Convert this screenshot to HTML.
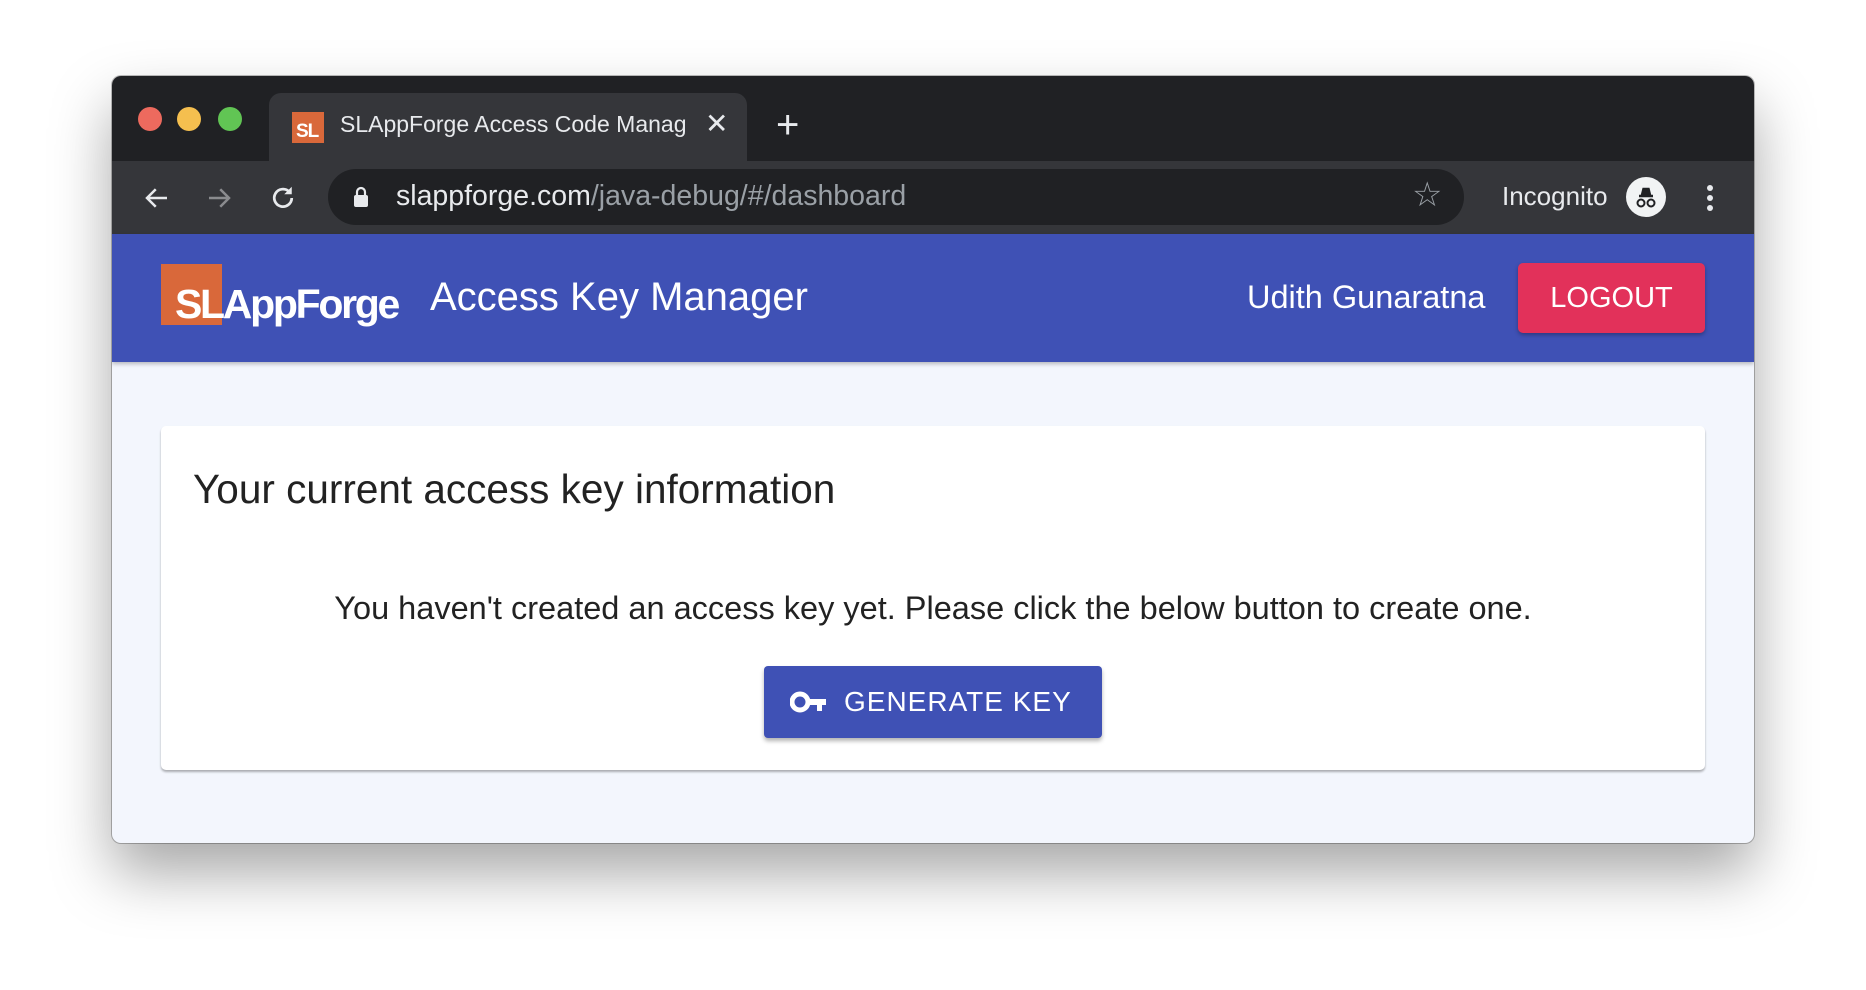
<!DOCTYPE html>
<html><head><meta charset="utf-8"><style>
*{box-sizing:border-box;margin:0;padding:0}
body{width:1866px;height:990px;background:#fff;font-family:"Liberation Sans",sans-serif;position:relative;overflow:hidden}
.win{position:absolute;left:112px;top:76px;width:1642px;height:767px;border-radius:9px;overflow:hidden;background:#f3f6fd;box-shadow:0 30px 60px rgba(0,0,0,.35),0 0 0 1px rgba(0,0,0,.25)}
.tabs{position:absolute;left:0;top:0;width:100%;height:85px;background:#202124}
.dot{position:absolute;top:31px;width:24px;height:24px;border-radius:50%}
.tab{position:absolute;left:157px;top:17px;width:478px;height:68px;background:#35363a;border-radius:12px 12px 0 0}
.tool{position:absolute;left:0;top:85px;width:100%;height:73px;background:#35363a}
.url{position:absolute;left:216px;top:8px;width:1136px;height:56px;background:#202124;border-radius:28px}
.hdr{position:absolute;left:0;top:158px;width:100%;height:128px;background:#3f51b5;box-shadow:0 2px 4px rgba(0,0,0,.25)}
.t{position:absolute;white-space:nowrap}
.card{position:absolute;left:49px;top:350px;width:1544px;height:344px;background:#fff;border-radius:5px;box-shadow:0 2px 2px rgba(0,0,0,.3)}
</style></head><body>
<div class="win">
 <div class="tabs">
  <div class="dot" style="left:26px;background:#ed6a5e"></div>
  <div class="dot" style="left:65px;background:#f5bf4f"></div>
  <div class="dot" style="left:106px;background:#61c554"></div>
  <div class="tab">
   <div style="position:absolute;left:23px;top:19px;width:32px;height:31px;background:#d9683a"><span style="position:absolute;left:4px;top:9px;color:#fff;font-weight:bold;font-size:19px;letter-spacing:-1px">SL</span></div>
   <div class="t" style="left:71px;top:18px;color:#e8eaed;font-size:23px;width:356px;overflow:hidden">SLAppForge Access Code Manag</div>
   <div class="t" style="left:436px;top:14px;color:#e8eaed;font-size:28px">✕</div>
  </div>
  <div class="t" style="left:664px;top:27px;color:#e8eaed;font-size:40px;font-weight:300">+</div>
 </div>
 <div class="tool">
  <svg style="position:absolute;left:30px;top:22px" width="30" height="30" viewBox="0 0 24 24"><path d="M20 12H5M11 5l-7 7 7 7" stroke="#e8eaed" stroke-width="2" fill="none"/></svg>
  <svg style="position:absolute;left:92px;top:22px" width="30" height="30" viewBox="0 0 24 24"><path d="M4 12h15M13 5l7 7-7 7" stroke="#8a8b8e" stroke-width="2" fill="none"/></svg>
  <svg style="position:absolute;left:156px;top:22px" width="30" height="30" viewBox="0 0 24 24"><path d="M19 12a7 7 0 1 1-2-5" stroke="#e8eaed" stroke-width="2.2" fill="none"/><path d="M19 3v6h-6z" fill="#e8eaed"/></svg>
  <div class="url">
   <svg style="position:absolute;left:24px;top:16px" width="18" height="24" viewBox="0 0 18 24"><rect x="2" y="10" width="14" height="12" rx="2" fill="#e8eaed"/><path d="M5 10V7a4 4 0 0 1 8 0v3" stroke="#e8eaed" stroke-width="2.2" fill="none"/></svg>
   <div class="t" style="left:68px;top:11px;font-size:28.5px;color:#e8eaed">slappforge.com<span style="color:#9aa0a6">/java-debug/#/dashboard</span></div>
   <div class="t" style="left:1084px;top:6px;font-size:34px;color:#9aa0a6">☆</div>
  </div>
  <div class="t" style="left:1390px;top:20px;font-size:26px;color:#e8eaed">Incognito</div>
  <div style="position:absolute;left:1514px;top:16px;width:40px;height:40px;border-radius:50%;background:#f1f3f4">
   <svg width="40" height="40" viewBox="0 0 40 40"><path d="M13 19h14M16 18l1.5-6h5l1.5 6" stroke="#202124" stroke-width="2.5" fill="#202124"/><circle cx="15" cy="26" r="3.5" stroke="#202124" stroke-width="2" fill="none"/><circle cx="25" cy="26" r="3.5" stroke="#202124" stroke-width="2" fill="none"/></svg>
  </div>
  <div style="position:absolute;left:1595px;top:24px;width:6px;height:6px;border-radius:50%;background:#e8eaed;box-shadow:0 10px 0 #e8eaed,0 20px 0 #e8eaed"></div>
 </div>
 <div class="hdr">
  <div style="position:absolute;left:49px;top:30px;width:61px;height:61px;background:#d9683a"></div>
  <div class="t" style="left:63px;top:47px;font-size:41px;font-weight:bold;color:#fff;letter-spacing:-2.3px">SLAppForge</div>
  <div class="t" style="left:318px;top:41px;font-size:40px;color:#fff">Access Key Manager</div>
  <div class="t" style="left:1135px;top:45px;font-size:32.5px;color:#fff">Udith Gunaratna</div>
  <div style="position:absolute;left:1406px;top:29px;width:187px;height:70px;background:#e2315a;border-radius:5px;box-shadow:0 2px 4px rgba(0,0,0,.3);color:#fff;font-size:29px;text-align:center;line-height:70px">LOGOUT</div>
 </div>
 <div class="card">
  <div class="t" style="left:32px;top:40px;font-size:40.5px;color:#222">Your current access key information</div>
  <div class="t" style="left:0;width:1544px;text-align:center;top:164px;font-size:32.5px;color:#222">You haven't created an access key yet. Please click the below button to create one.</div>
  <div style="position:absolute;left:603px;top:240px;width:338px;height:72px;background:#3f51b5;border-radius:4px;box-shadow:0 3px 4px rgba(0,0,0,.3)">
   <svg style="position:absolute;left:26px;top:23px" width="38" height="26" viewBox="0 0 38 26"><circle cx="10" cy="13" r="8" stroke="#fff" stroke-width="5" fill="none"/><path d="M17 10h19v6h-4v6h-5v-6h-10z" fill="#fff"/></svg>
   <div class="t" style="left:80px;top:20px;font-size:28px;color:#fff;letter-spacing:1px">GENERATE KEY</div>
  </div>
 </div>
</div>
</body></html>
